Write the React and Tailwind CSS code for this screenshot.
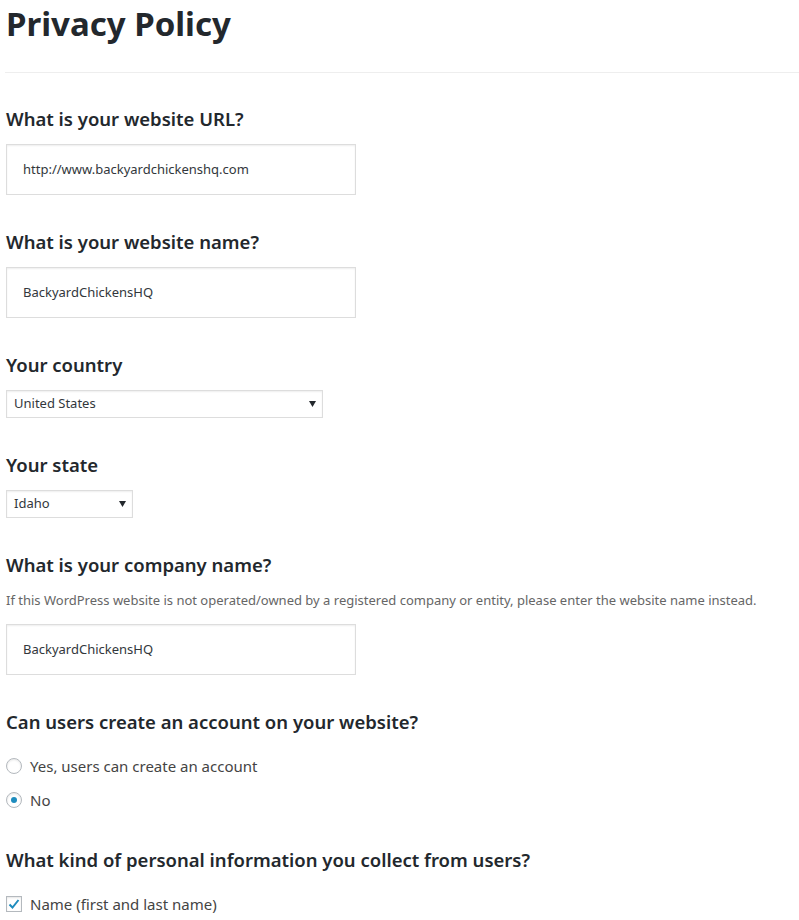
import React from "react";

const font = { fontFamily: '"Noto Sans", "Open Sans", Arial, sans-serif' };

function Heading({ children }) {
  return (
    <h2 className="text-[18.5px] leading-[26px] font-semibold text-[#23282d]">
      {children}
    </h2>
  );
}

function TextBox({ value, top = "mt-[12px]" }) {
  return (
    <div className={`${top} h-[51px] w-[350px] border border-[#dddddd] bg-white shadow-[inset_0_1px_2px_rgba(0,0,0,0.07)] flex items-center px-[16px]`}>
      <span className="text-[13px] text-[#32373c]">{value}</span>
    </div>
  );
}

function Select({ value, width }) {
  return (
    <div
      className={`mt-[12px] h-[28px] ${width} border border-[#dddddd] bg-white shadow-[inset_0_1px_2px_rgba(0,0,0,0.07)] flex items-center justify-between pl-[7px] pr-[6px]`}
    >
      <span className="text-[13px] text-[#32373c]">{value}</span>
      <svg width="7" height="6" viewBox="0 0 7 6">
        <path d="M0 0 H7 L3.5 6 Z" fill="#23282d" />
      </svg>
    </div>
  );
}

function Radio({ checked, label }) {
  return (
    <div className="flex items-center gap-[8px] h-[34px]">
      <span className="w-[16px] h-[16px] rounded-full border border-[#b4b9be] bg-white shadow-[inset_0_1px_2px_rgba(0,0,0,0.1)] flex items-center justify-center">
        {checked && <span className="w-[6px] h-[6px] rounded-full bg-[#1e8cbe]" />}
      </span>
      <span className="text-[15px] text-[#444444]">{label}</span>
    </div>
  );
}

export default function App() {
  return (
    <div className="w-[799px] bg-white px-[6px] pb-6" style={font}>
      <h1 className="text-[33px] leading-[46px] font-bold text-[#23282d] pt-[1px]">
        Privacy Policy
      </h1>
      <hr className="mt-[25px] -mr-[6px] -ml-[1px] border-0 border-t border-[#eeeeee]" />

      <div className="mt-[33px]">
        <Heading>What is your website URL?</Heading>
        <TextBox value="http://www.backyardchickenshq.com" />
      </div>

      <div className="mt-[34px]">
        <Heading>What is your website name?</Heading>
        <TextBox value="BackyardChickensHQ" />
      </div>

      <div className="mt-[34px]">
        <Heading>Your country</Heading>
        <Select value="United States" width="w-[317px]" />
      </div>

      <div className="mt-[34px]">
        <Heading>Your state</Heading>
        <Select value="Idaho" width="w-[127px]" />
      </div>

      <div className="mt-[34px]">
        <Heading>What is your company name?</Heading>
        <p className="mt-[13px] text-[13px] leading-[18px] text-[#666666]">
          If this WordPress website is not operated/owned by a registered company or entity, please enter the website name instead.
        </p>
        <TextBox value="BackyardChickensHQ" top="mt-[15px]" />
      </div>

      <div className="mt-[34px]">
        <Heading>Can users create an account on your website?</Heading>
        <div className="mt-[14px]">
          <Radio label="Yes, users can create an account" />
          <Radio checked label="No" />
        </div>
      </div>

      <div className="mt-[30px]">
        <Heading>What kind of personal information you collect from users?</Heading>
        <div className="mt-[20px] flex items-center gap-[8px]">
          <span className="w-[16px] h-[16px] border border-[#b4b9be] bg-white shadow-[inset_0_1px_2px_rgba(0,0,0,0.1)] flex items-center justify-center">
            <svg width="14" height="14" viewBox="0 0 14 14">
              <path d="M2.5 7.5 L5.5 10.5 L11.5 3" fill="none" stroke="#1e8cbe" strokeWidth="2" />
            </svg>
          </span>
          <span className="text-[15px] text-[#444444]">Name (first and last name)</span>
        </div>
      </div>
    </div>
  );
}
